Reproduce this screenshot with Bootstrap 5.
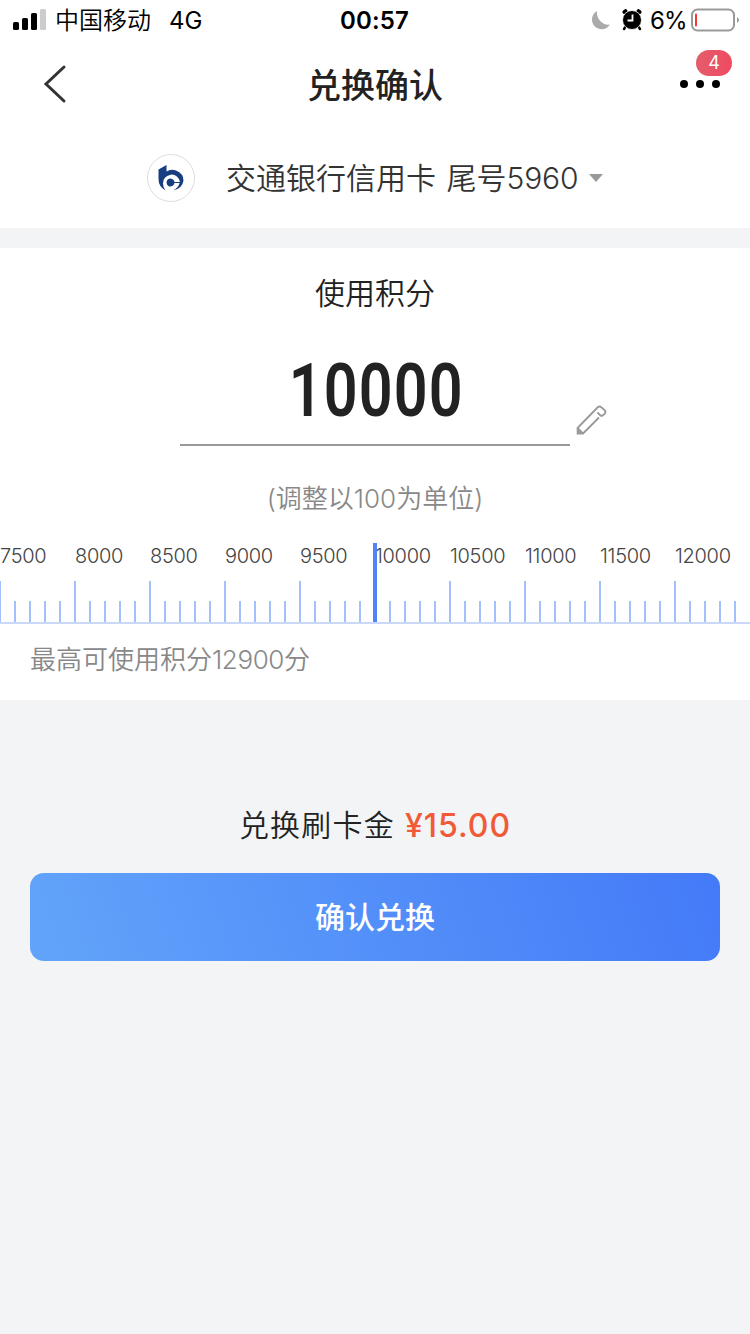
<!DOCTYPE html>
<html lang="zh-CN">
<head>
    <meta charset="UTF-8">
    <meta name="viewport" content="width=device-width, initial-scale=1.0">
    <title>兑换确认</title>
    <link rel="stylesheet" href="https://cdn.jsdelivr.net/npm/bootstrap@5.3.0/dist/css/bootstrap.min.css">

    <style>
        body {
            background-color: #f2f4f6;
            color: #222;
            font-family: Inter, "Noto Sans CJK SC", sans-serif;
            overflow-x: hidden;
        }

        svg {
            display: block;
            flex: none;
        }

        .status-bar {
            display: grid;
            grid-template-columns: 1fr auto 1fr;
            height: 40px;
            padding: 0 11px 0 13px;
            font-size: 24px;
            line-height: 42px;
            color: #000;
        }

        .status-bar svg {
            margin-bottom: 2px;
        }

        .status-time {
            margin-right: 3px;
            font-weight: 600;
            letter-spacing: 0.2px;
        }

        .status-carrier {
            margin-left: 9px;
            font-weight: 350;
        }

        .status-network {
            margin-left: 18px;
        }

        .status-battery {
            letter-spacing: -0.7px;
        }

        .title-bar {
            display: grid;
            grid-template-columns: 1fr auto 1fr;
            height: 88px;
            padding: 0 30px;
        }

        .title-bar h1 {
            padding-top: 4px;
            font-size: 34px;
            font-weight: 500;
            line-height: 84px;
        }

        .back-icon {
            margin-left: 13px;
        }

        .msg-count {
            top: -30px;
            right: -12px;
            width: 36px;
            height: 26px;
            border-radius: 13px;
            background: linear-gradient(90deg, #e35d6c, #f04a60);
            color: #fff;
            font-size: 18px;
            line-height: 26px;
        }

        .bank-row {
            height: 100px;
            padding-left: 147px;
            font-size: 30px;
            line-height: 98px;
            color: #333;
        }

        .bank-logo {
            width: 48px;
            height: 48px;
            border: 1px solid #ddd;
            border-radius: 50%;
            margin-right: 31px;
        }

        .bank-name {
            font-weight: 350;
            word-spacing: 2px;
        }

        .bank-tail {
            letter-spacing: -0.1px;
        }

        .points-panel {
            margin-top: 20px;
            height: 452px;
        }

        .points-label {
            padding-top: 22px;
            font-size: 30px;
            font-weight: 350;
            line-height: 46px;
        }

        .points-edit {
            height: 130px;
            padding-left: 180px;
        }

        .points-value {
            width: 390px;
            height: 130px;
            border-bottom: 2px solid #999;
            font-family: Roboto, sans-serif;
            font-size: 75px;
            font-weight: 650;
            line-height: 149px;
        }

        .points-value span {
            display: inline-block;
            padding-left: 4px;
            letter-spacing: 1.4px;
            transform: scaleX(0.79);
        }

        .edit-icon {
            margin: 0 0 9px 4px;
        }

        .unit-tip {
            margin-top: 34px;
            font-size: 26px;
            font-weight: 350;
            line-height: 38px;
            color: #888;
        }

        .ruler {
            height: 106px;
        }

        .ruler-labels {
            padding-top: 14px;
            font-size: 20px;
            font-weight: 350;
            letter-spacing: -0.3px;
            line-height: 48px;
            color: #444;
        }

        .ruler-labels span {
            flex: 0 0 75px;
            height: 49px;
        }

        .ruler-ticks {
            height: 43px;
            border-bottom: 2px solid #c9d8fb;
        }

        .ruler-ticks i {
            flex: 0 0 15px;
            height: 21px;
            border-left: 2px solid #a3bffc;
        }

        .ruler-ticks i:first-child {
            flex-basis: 14px;
            border-left-width: 1px;
        }

        .ruler-ticks i:nth-child(5n+1) {
            height: 41px;
        }

        .ruler-pointer {
            left: 373px;
            top: 25px;
            width: 4px;
            height: 79px;
            background: #5282f7;
        }

        .max-tip {
            padding-left: 30px;
            font-size: 26px;
            font-weight: 350;
            line-height: 71px;
            color: #888;
        }

        .max-points {
            letter-spacing: -0.4px;
        }

        .cash-line {
            margin-top: 100px;
            height: 50px;
            font-size: 30px;
            line-height: 51px;
        }

        .cash-name {
            font-weight: 350;
            letter-spacing: 1.2px;
        }

        .cash-amount {
            margin-left: 10px;
            font-size: 32px;
            font-weight: 500;
            letter-spacing: 1px;
            color: #f15a36;
        }

        .btn-exchange,
        .btn-exchange:hover {
            width: 690px;
            height: 88px;
            margin: 23px 30px 0;
            border: 0;
            border-radius: 14px;
            background: linear-gradient(70deg, #62a4fa, #447af8);
            color: #fff;
            font-size: 30px;
            font-weight: 500;
        }
    </style>
</head>
<body>
    <header class="bg-white">
        <div class="status-bar">
            <div class="d-flex align-items-center">
                <svg width="33" height="22" viewBox="0 0 33 22">
                    <rect x="0" y="13" width="6" height="8" rx="1.5"/>
                    <rect x="9" y="9" width="6" height="12" rx="1.5"/>
                    <rect x="18" y="4" width="6" height="17" rx="1.5"/>
                    <rect x="27" y="0" width="6" height="21" rx="1.5" fill="#ccc"/>
                </svg>
                <span class="status-carrier">中国移动</span>
                <span class="status-network">4G</span>
            </div>
            <div class="status-time">00:57</div>
            <div class="d-flex align-items-center justify-content-end">
                <svg class="me-2" width="22" height="22" viewBox="0 0 22 22">
                    <path d="M7 2A9.700 9.700 0 1 0 20 15.500C13 17 6 10 7 2Z" fill="#aaa"/>
                </svg>
                <svg class="me-2" width="22" height="22" viewBox="0 0 22 22">
                    <path d="M4.500 3L5.500 2.200M19.500 3L18.500 2.200" stroke="#000" stroke-width="4" stroke-linecap="round"/>
                    <path d="M6 17L4 20M18 17L20 20" stroke="#000" stroke-width="2.500" stroke-linecap="round"/>
                    <circle cx="12" cy="11" r="9.500" stroke="#fff" stroke-width="0.800"/>
                    <path d="M12.500 5.500V11.500H7.500" fill="none" stroke="#fff" stroke-width="1.800"/>
                </svg>
                <span class="status-battery">6%</span>
                <svg class="ms-1" width="48" height="24" viewBox="0 0 48 24">
                    <rect x="1" y="1.5" width="42" height="21" rx="5.5" fill="none" stroke="#999" stroke-width="2"/>
                    <rect x="4" y="5.5" width="2" height="13" rx="1" fill="#f33b30"/>
                    <path d="M46 9Q50 12 46 15Z" fill="#999"/>
                </svg>
            </div>
        </div>

        <div class="title-bar align-items-center">
            <svg class="back-icon" width="24" height="40" viewBox="0 0 24 40">
                <path d="M21 3L3 20L21 37" fill="none" stroke="#333" stroke-width="3" stroke-linecap="round"/>
            </svg>
            <h1 class="m-0">兑换确认</h1>
            <div class="position-relative ms-auto">
                <svg width="40" height="8" viewBox="0 0 40 8">
                    <circle cx="4" cy="4" r="4"/>
                    <circle cx="20" cy="4" r="4"/>
                    <circle cx="36" cy="4" r="4"/>
                </svg>
                <span class="msg-count position-absolute text-center">4</span>
            </div>
        </div>

        <div class="bank-row d-flex align-items-center">
            <div class="bank-logo d-flex align-items-center justify-content-center">
                <svg width="26" height="26" viewBox="0 0 26 26">
                    <path d="M0.500 4.500L8.500 0V6.500Q13 3.500 18 5.500Q25.500 8.500 25.500 15.500Q24.500 23.500 15 25.500Q20.500 23 21.500 18H16.500A4 4 0 1 1 16.500 17H22Q20 9.500 13.500 9.500Q5 11 5 18.500Q5 22.500 7.500 25.500Q0.500 21.500 0.500 14Z" fill="#173e80"/>
                </svg>
            </div>
            <span class="bank-name">交通银行信用卡 尾号<span class="bank-tail">5960</span></span>
            <svg class="ms-2" width="18" height="8" viewBox="0 0 18 8">
                <path d="M3 0H17L10 8Z" fill="#999"/>
            </svg>
        </div>
    </header>

    <section class="points-panel bg-white">
        <div class="points-label text-center">使用积分</div>
        <div class="points-edit d-flex align-items-end">
            <div class="points-value text-center"><span>10000</span></div>
            <svg class="edit-icon" width="34" height="34" viewBox="0 0 34 34">
                <path d="M25 14.500L9 30.500L3.500 25L23.500 4.500Q25.500 2.500 27.500 4.500L30.500 7Q32.500 9 30.500 11L28.500 12.500Q27.500 13.500 26 12L23.500 9.500" fill="none" stroke="#999" stroke-width="1.800" stroke-linejoin="round"/>
                <path d="M2.700 25L9 31.500H2.700Z" fill="#999"/>
            </svg>
        </div>
        <div class="unit-tip text-center">(调整以100为单位)</div>

        <div class="ruler position-relative overflow-hidden">
            <div class="ruler-labels d-flex" id="rulerLabels"></div>
            <div class="ruler-ticks d-flex align-items-end" id="rulerTicks"></div>
            <div class="ruler-pointer position-absolute"></div>
        </div>
        <div class="max-tip">最高可使用积分<span class="max-points">12900</span>分</div>
    </section>

    <main>
        <div class="cash-line d-flex justify-content-center">
            <span class="cash-name">兑换刷卡金</span>
            <span class="cash-amount">¥15.00</span>
        </div>
        <button type="button" class="btn btn-exchange">确认兑换</button>
    </main>

    <script src="https://cdn.jsdelivr.net/npm/bootstrap@5.3.0/dist/js/bootstrap.bundle.min.js"></script>
    <script>
        const labels = document.getElementById("rulerLabels");
        const ticks = document.getElementById("rulerTicks");

        // One label per 500 points, one tick per 100
        for (let points = 7500; points < 12500; points += 100) {
            if (points % 500 === 0) {
                const label = document.createElement("span");
                label.textContent = points;
                labels.appendChild(label);
            }
            ticks.appendChild(document.createElement("i"));
        }
    </script>
</body>
</html>
